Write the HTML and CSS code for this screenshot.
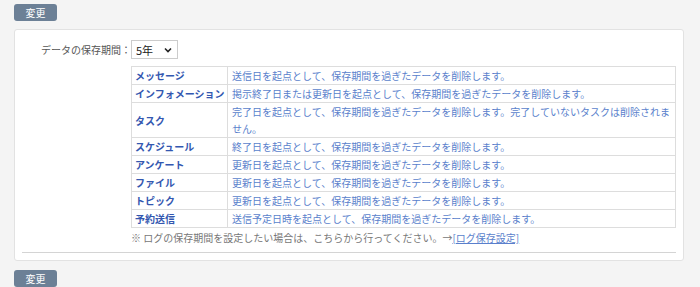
FILE: index.html
```html
<!DOCTYPE html>
<html lang="ja">
<head>
  <meta charset="UTF-8" />
  <meta name="viewport" content="width=device-width, initial-scale=1.0"/>
  <title>保存期間設定</title>
  <link rel="stylesheet" href="styles.css">
</head>
<body>

  <div class="actions">
    <button type="button" class="btn">変更</button>
  </div>

  <div class="panel">
    <div class="form-row">
      <label for="keep-period" class="form-label">データの保存期間：</label>
      <div class="form-value">
        <span class="select-wrap">
          <select id="keep-period">
            <option>1年</option>
            <option>3年</option>
            <option selected>5年</option>
            <option>10年</option>
          </select>
          <svg class="chevron" width="8" height="6" viewBox="0 0 8 6"><path d="M1 1.5 L4 4.5 L7 1.5" fill="none" stroke="#222" stroke-width="1.6"/></svg>
        </span>
      </div>
    </div>

    <div class="form-row">
      <div class="form-label"></div>
      <div class="form-value">
        <table class="period-table">
          <colgroup>
            <col class="col-name">
            <col>
          </colgroup>
          <tbody>
            <tr><th>メッセージ</th><td>送信日を起点として、保存期間を過ぎたデータを削除します。</td></tr>
            <tr><th>インフォメーション</th><td>掲示終了日または更新日を起点として、保存期間を過ぎたデータを削除します。</td></tr>
            <tr><th>タスク</th><td>完了日を起点として、保存期間を過ぎたデータを削除します。完了していないタスクは削除されません。</td></tr>
            <tr><th>スケジュール</th><td>終了日を起点として、保存期間を過ぎたデータを削除します。</td></tr>
            <tr><th>アンケート</th><td>更新日を起点として、保存期間を過ぎたデータを削除します。</td></tr>
            <tr><th>ファイル</th><td>更新日を起点として、保存期間を過ぎたデータを削除します。</td></tr>
            <tr><th>トピック</th><td>更新日を起点として、保存期間を過ぎたデータを削除します。</td></tr>
            <tr><th>予約送信</th><td>送信予定日時を起点として、保存期間を過ぎたデータを削除します。</td></tr>
          </tbody>
        </table>
        <p class="note">※ ログの保存期間を設定したい場合は、こちらから行ってください。→<a href="#">[ログ保存設定]</a></p>
      </div>
    </div>

    <hr class="divider">
  </div>

  <div class="actions">
    <button type="button" class="btn">変更</button>
  </div>

</body>
</html>
```

FILE: styles.css
```css
body {
  font-family: "Noto Sans CJK JP", "Noto Sans", sans-serif;
  font-size: 10px;
  background: #f4f4f4;
  color: #555;
  margin: 0;
  padding: 4px 14px 0;
}
.actions {
  display: flex;
}
.btn {
  width: 43px;
  height: 17px;
  padding: 0;
  border: none;
  border-radius: 3px;
  background: #6c8096;
  color: white;
  font-family: inherit;
  font-size: 10px;
  line-height: 17px;
}
.panel {
  margin: 8px 0 9px;
  width: 670px;
  box-sizing: border-box;
  background: white;
  border: 1px solid #e2e2e2;
  border-radius: 3px;
  padding: 10px 7px 7px;
}
.form-row {
  display: grid;
  grid-template-columns: 109px 1fr;
}
.form-label {
  text-align: right;
  line-height: 19px;
  font-size: 10px;
  color: #555;
}
.select-wrap {
  position: relative;
  display: inline-block;
}
.select-wrap select {
  appearance: none;
  -webkit-appearance: none;
  width: 47px;
  height: 19px;
  padding: 0 0 0 4px;
  border: 1px solid #ccc;
  border-radius: 0;
  background: white;
  font-family: inherit;
  font-size: 11px;
  color: #222;
}
.chevron {
  position: absolute;
  right: 6px;
  top: 7px;
  pointer-events: none;
}
.period-table {
  width: 100%;
  margin-top: 7px;
  border-collapse: collapse;
  border: 1px solid #ddd;
  table-layout: fixed;
}
.col-name {
  width: 96px;
}
.period-table th,
.period-table td {
  border: 1px solid #ddd;
  padding: 0 3px 0 3px;
  line-height: 17px;
  text-align: left;
  vertical-align: middle;
}
.period-table th {
  white-space: nowrap;
  color: #3357b0;
  font-weight: bold;
  font-size: 10px;
}
.period-table td {
  padding-left: 4px;
  color: #5a7fcc;
}
.note {
  margin: 2px 0 0;
  line-height: 16px;
  color: #777;
}
.note a {
  color: #5a7fcc;
}
.divider {
  margin: 6px 0 0;
  border: none;
  border-top: 1px solid #d4d4d4;
}
```
